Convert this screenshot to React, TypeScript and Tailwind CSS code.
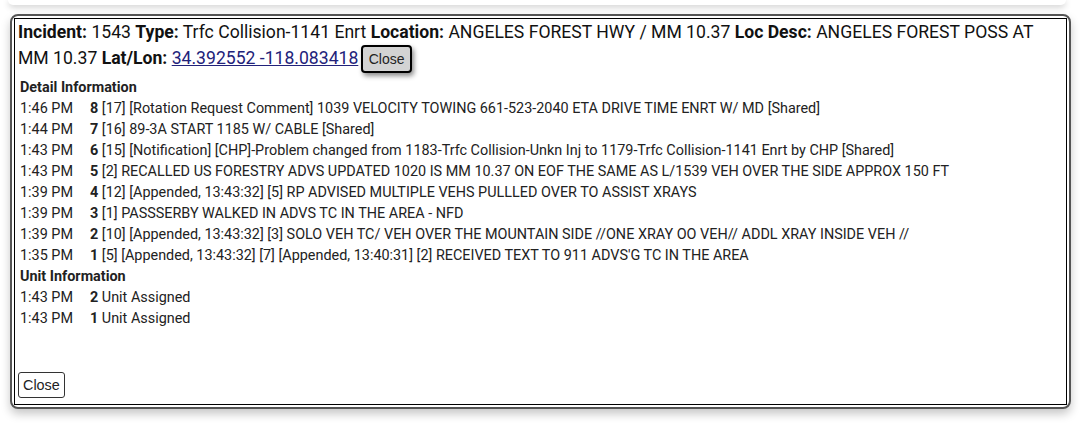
const details = [
  { time: '1:46 PM', n: 8, text: '[17] [Rotation Request Comment] 1039 VELOCITY TOWING 661-523-2040 ETA DRIVE TIME ENRT W/ MD [Shared]' },
  { time: '1:44 PM', n: 7, text: '[16] 89-3A START 1185 W/ CABLE [Shared]' },
  { time: '1:43 PM', n: 6, text: '[15] [Notification] [CHP]-Problem changed from 1183-Trfc Collision-Unkn Inj to 1179-Trfc Collision-1141 Enrt by CHP [Shared]' },
  { time: '1:43 PM', n: 5, text: '[2] RECALLED US FORESTRY ADVS UPDATED 1020 IS MM 10.37 ON EOF THE SAME AS L/1539 VEH OVER THE SIDE APPROX 150 FT' },
  { time: '1:39 PM', n: 4, text: '[12] [Appended, 13:43:32] [5] RP ADVISED MULTIPLE VEHS PULLLED OVER TO ASSIST XRAYS' },
  { time: '1:39 PM', n: 3, text: '[1] PASSSERBY WALKED IN ADVS TC IN THE AREA - NFD' },
  { time: '1:39 PM', n: 2, text: '[10] [Appended, 13:43:32] [3] SOLO VEH TC/ VEH OVER THE MOUNTAIN SIDE //ONE XRAY OO VEH// ADDL XRAY INSIDE VEH //' },
  { time: '1:35 PM', n: 1, text: "[5] [Appended, 13:43:32] [7] [Appended, 13:40:31] [2] RECEIVED TEXT TO 911 ADVS'G TC IN THE AREA" },
]

const units = [
  { time: '1:43 PM', n: 2, text: 'Unit Assigned' },
  { time: '1:43 PM', n: 1, text: 'Unit Assigned' },
]

function Rows({ rows }: { rows: { time: string; n: number; text: string }[] }) {
  return (
    <div className="grid grid-cols-[70px_1fr]">
      {rows.map((r, i) => (
        <div key={i} className="contents">
          <div className="h-[21px] leading-[21px]">{r.time}</div>
          <div className="h-[21px] leading-[21px] whitespace-nowrap">
            <span className="font-bold">{r.n}</span> {r.text}
          </div>
        </div>
      ))}
    </div>
  )
}

export default function App() {
  return (
    <div className="w-[1080px] h-[439px] bg-white overflow-hidden font-['Roboto','Noto_Sans',sans-serif] text-[#222]">
      <div className="h-[5px] ml-[8px] mr-[14px] bg-white rounded-b-lg shadow-[0_2px_6px_rgba(0,0,0,0.22)]" />
      <div className="ml-[10px] mr-[9px] mt-[9px] rounded-lg border-2 border-[#555] p-[2px] bg-white shadow-[0_5px_10px_rgba(0,0,0,0.22)]">
        <div className="border border-black h-[387px] pl-[3px] pr-[8px]">
          <div className="text-[17.6px] leading-[26px] text-[#111]">
            <b>Incident:</b> 1543 <b>Type:</b> Trfc Collision-1141 Enrt <b>Location:</b> ANGELES FOREST HWY / MM 10.37{' '}
            <b>Loc Desc:</b> ANGELES FOREST POSS AT MM 10.37 <b>Lat/Lon:</b>{' '}
            <a href="#" className="underline text-[#22227a]">34.392552 -118.083418</a>{' '}
            <button className="align-middle h-[28px] px-[6px] -ml-[2px] bg-[#d3d3d3] border-2 border-black rounded-[4px] text-[14px] leading-none font-['Liberation_Sans',Arial,sans-serif] text-[#222] shadow-[2px_3px_5px_rgba(0,0,0,0.45)]">
              Close
            </button>
          </div>
          <div className="mt-[4px] pl-[2px] text-[14.4px]">
            <div className="h-[21px] leading-[21px] font-bold">Detail Information</div>
            <Rows rows={details} />
            <div className="h-[21px] leading-[21px] font-bold">Unit Information</div>
            <Rows rows={units} />
          </div>
          <button className="mt-[43px] h-[26px] px-[4px] bg-white border border-[#333] rounded-[3px] text-[14.4px] leading-none font-['Liberation_Sans',Arial,sans-serif] text-[#222]">
            Close
          </button>
        </div>
      </div>
    </div>
  )
}
